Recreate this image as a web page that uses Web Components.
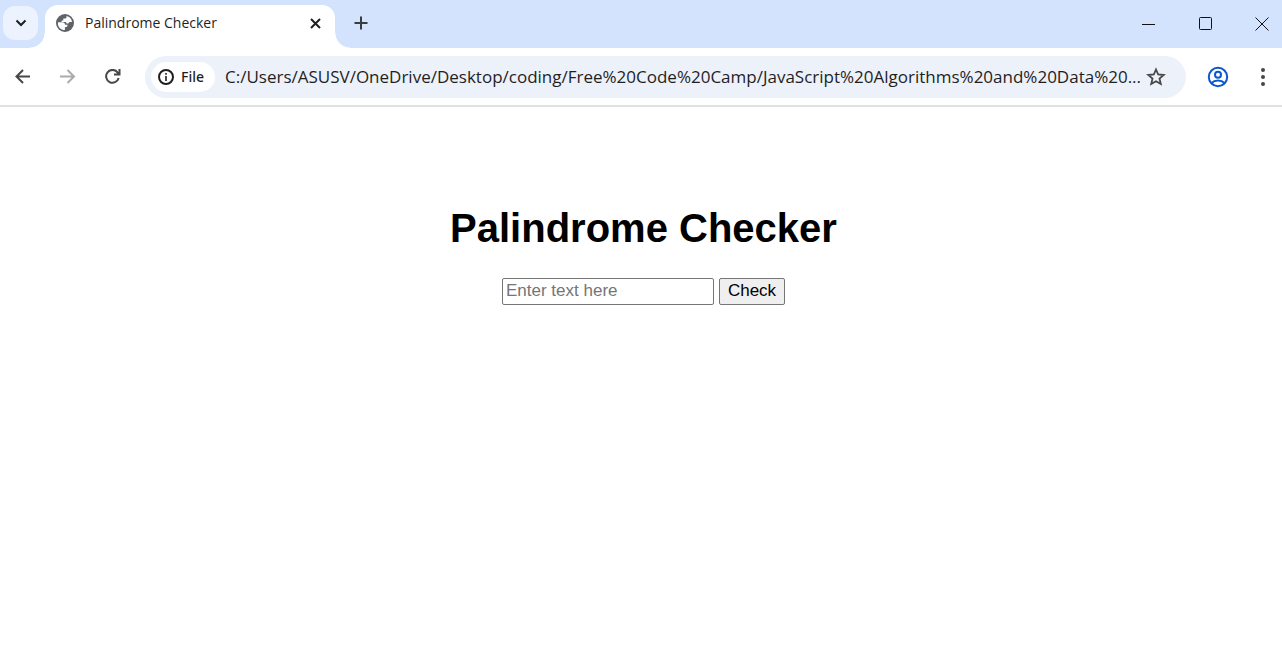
<!DOCTYPE html>
<html lang="en">
<head>
<meta charset="utf-8">
<title>Palindrome Checker</title>
<style>
  html, body { margin: 0; min-height: 100%; background: #fff; }
  body { font-family: "Open Sans", "Noto Sans", sans-serif; color: #1f1f1f; }
</style>
</head>
<body>
<browser-window>
  <tab-strip slot="tabs"><browser-tab>Palindrome Checker</browser-tab></tab-strip>
  <tool-bar slot="toolbar"><address-bar url="C:/Users/ASUSV/OneDrive/Desktop/coding/Free%20Code%20Camp/JavaScript%20Algorithms%20and%20Data%20..."></address-bar></tool-bar>
  <palindrome-checker></palindrome-checker>
</browser-window>

<script>
const reset = `
  :host, * { box-sizing: border-box; }
  button { display: grid; place-items: center; margin: 0; padding: 0; border: 0; background: none; color: inherit; font: inherit; }
  svg { display: block; fill: none; stroke: currentColor; }
`;

function define(name, css, html, setup) {
  const template = document.createElement('template');
  template.innerHTML = `<style>${reset}${css}</style>${html}`;
  customElements.define(name, class extends HTMLElement {
    constructor() {
      super();
      this.attachShadow({ mode: 'open' }).append(template.content.cloneNode(true));
    }
    connectedCallback() { if (setup) setup(this, this.shadowRoot); }
  });
}

define('browser-window', `
  :host { display: flex; flex-direction: column; min-height: 100vh; }
`, `<slot name="tabs"></slot><slot name="toolbar"></slot><slot></slot>`);

define('tab-strip', `
  :host { display: flex; align-items: stretch; height: 48px; padding-left: 3px; background: #d3e3fd; }
  .search { width: 35px; height: 34px; margin: 6px 7px 0 0; border-radius: 12px; background: #ecf2fe; }
  .new { width: 52px; padding-bottom: 2px; color: #3c3c3c; }
  .controls { display: flex; margin-left: auto; color: #111; }
  .controls button { width: 57px; }
  .controls button:last-child { width: 48px; padding-left: 8px; }
`, `
  <button class="search" aria-label="Search tabs"><svg width="12" height="8" stroke-width="2" viewBox="0 0 12 8"><path d="M1.5 1.5 6 6l4.500-4.500"/></svg></button>
  <slot></slot>
  <button class="new" aria-label="New tab"><svg width="14" height="14" stroke-width="2" viewBox="0 0 14 14"><path d="M7 .5v13M.5 7h13"/></svg></button>
  <div class="controls">
    <button aria-label="Minimize"><svg width="13" height="13" viewBox="0 0 13 13"><path d="M0 6.500h13"/></svg></button>
    <button aria-label="Maximize"><svg width="14" height="14" viewBox="0 0 14 14"><rect x=".5" y=".5" width="12" height="12" rx="1"/></svg></button>
    <button aria-label="Close window"><svg width="14" height="14" viewBox="0 0 14 14"><path d="m.5.5 13 13M13.500.5l-13 13"/></svg></button>
  </div>
`);

define('browser-tab', `
  :host { position: relative; display: flex; align-items: center; gap: 11px; width: 290px; margin-top: 5px; padding: 0 11px 7px;
    border-radius: 13px 13px 0 0; background: #fff; font-size: 14px; line-height: 20px; }
  :host::before, :host::after { content: ""; position: absolute; bottom: 0; width: 15px; height: 15px; }
  :host::before { right: 100%; background: radial-gradient(circle at 0 0, transparent 14px, #fff 15px); }
  :host::after { left: 100%; background: radial-gradient(circle at 100% 0, transparent 14px, #fff 15px); }
  .title { flex: 1; white-space: nowrap; overflow: hidden; }
  .close { width: 18px; height: 18px; }
`, `
  <svg width="18" height="18" viewBox="0 0 18 18"><circle cx="9" cy="9" r="9" fill="#5f6368" stroke="none"/><path fill="#fff" stroke="none" d="M2 8.200 6.300 8.300C8.100 8.400 9 9.100 9 10.800h2.600c0 1.700-.9 2.500-2.700 2.500v2.700C5.200 16.200 2 13.400 1.900 9.400ZM10.500 2.100v.8c0 1.100-.7 1.600-1.800 1.600H7.300v1.900H5.600v1.500h3.200c1.500 0 1.700.7 1.800 1.700h1.800c.3-1.200 1-1.600 2.200-1.600H16C15.700 5 13.600 2.700 10.500 2.100Z"/></svg>
  <span class="title"><slot></slot></span>
  <button class="close" aria-label="Close tab"><svg width="11" height="11" stroke-width="2" viewBox="0 0 11 11"><path d="m1 1 9 9M10 1l-9 9"/></svg></button>
`);

define('tool-bar', `
  :host { display: flex; align-items: center; height: 59px; padding-right: 6px; border-bottom: 2px solid #e0e0e0; background: #fff; color: #474747; }
  .nav { width: 45px; height: 40px; }
  .off { color: #ababab; }
  .reload { margin-right: 10px; }
  .profile { width: 64px; height: 40px; color: #0b57d0; }
  .menu { width: 26px; height: 40px; }
`, `
  <button class="nav" aria-label="Back"><svg width="16" height="16" stroke-width="2" viewBox="0 0 16 16"><path d="M15 7.500H2M8 1 1.500 7.500 8 14"/></svg></button>
  <button class="nav off" aria-label="Forward" disabled><svg width="16" height="16" stroke-width="2" viewBox="0 0 16 16"><path d="M0 7.500h13.500M7.500 1 14 7.500 7.500 14"/></svg></button>
  <button class="nav reload" aria-label="Reload"><svg width="16" height="16" stroke-width="2" viewBox="0 0 16 16"><path d="M13.700 9A6.400 6.400 0 1 1 12.500 3.300L14 5M14.500 0v5.500H9"/></svg></button>
  <slot></slot>
  <button class="profile" aria-label="Profile"><svg width="22" height="22" stroke-width="2" viewBox="0 0 22 22"><circle cx="11" cy="11" r="9.200"/><circle cx="11" cy="8.700" r="3"/><path d="M4.300 17.200c3.600-3.600 9.800-3.600 13.400 0"/></svg></button>
  <button class="menu" aria-label="Menu"><svg width="4" height="18" viewBox="0 0 4 18"><g fill="currentColor" stroke="none"><circle cx="2" cy="2" r="2"/><circle cx="2" cy="9" r="2"/><circle cx="2" cy="16" r="2"/></g></svg></button>
`);

define('address-bar', `
  :host { flex: 1; min-width: 0; display: flex; align-items: center; height: 42px; padding: 0 20px 0 6px; border-radius: 21px; background: #ecf1fa; color: #1f1f1f; }
  .chip { display: flex; align-items: center; gap: 7px; width: 64px; height: 30px; padding-left: 7px; border-radius: 15px; background: #fff; font: 500 14px/20px "Noto Sans", sans-serif; }
  input { flex: 1; min-width: 0; height: 30px; margin: 0 0 0 10px; padding: 0; border: 0; outline: 0; background: none; color: inherit;
    font-family: inherit; font-size: 17px; text-overflow: ellipsis; }
  .star { width: 20px; height: 30px; color: #474747; }
`, `
  <button class="chip"><svg width="16" height="16" stroke-width="2" viewBox="0 0 16 16"><circle cx="8" cy="8" r="7"/><path stroke-width="1.600" d="M8 7v5M8 4v1.700"/></svg>File</button>
  <input type="text" aria-label="Address" spellcheck="false">
  <button class="star" aria-label="Bookmark this page"><svg width="20" height="20" stroke-width="1.800" viewBox="0 0 20 20"><path d="m10 2.500 2.200 5 5.500.5-4.200 3.600 1.300 5.400L10 14.200 5.200 17l1.300-5.400L2.300 8l5.500-.5Z"/></svg></button>
`, (host, root) => { root.querySelector('input').value = host.getAttribute('url'); });

define('palindrome-checker', `
  :host { display: flex; flex-direction: column; align-items: center; padding: 98px 0 0 5px; font-family: "Liberation Sans", Arial, sans-serif; color: #000; }
  h1 { margin: 0 0 27px; font-size: 40px; line-height: 46px; }
  form { display: flex; gap: 5px; }
  input, form button { height: 27px; border: 1px solid #767676; border-radius: 2px; font: 17px/20px "Liberation Sans", Arial, sans-serif; color: #000; }
  input { width: 212px; margin: 0; padding: 0 3px 2px; background: #fff; }
  input::placeholder { color: #757575; }
  form button { width: 66px; padding-bottom: 2px; background: #efefef; }
`, `
  <h1>Palindrome Checker</h1>
  <form>
    <input type="text" placeholder="Enter text here" aria-label="Text to check">
    <button type="submit">Check</button>
  </form>
`, (host, root) => {
  root.querySelector('form').addEventListener('submit', (event) => event.preventDefault());
});
</script>
</body>
</html>
